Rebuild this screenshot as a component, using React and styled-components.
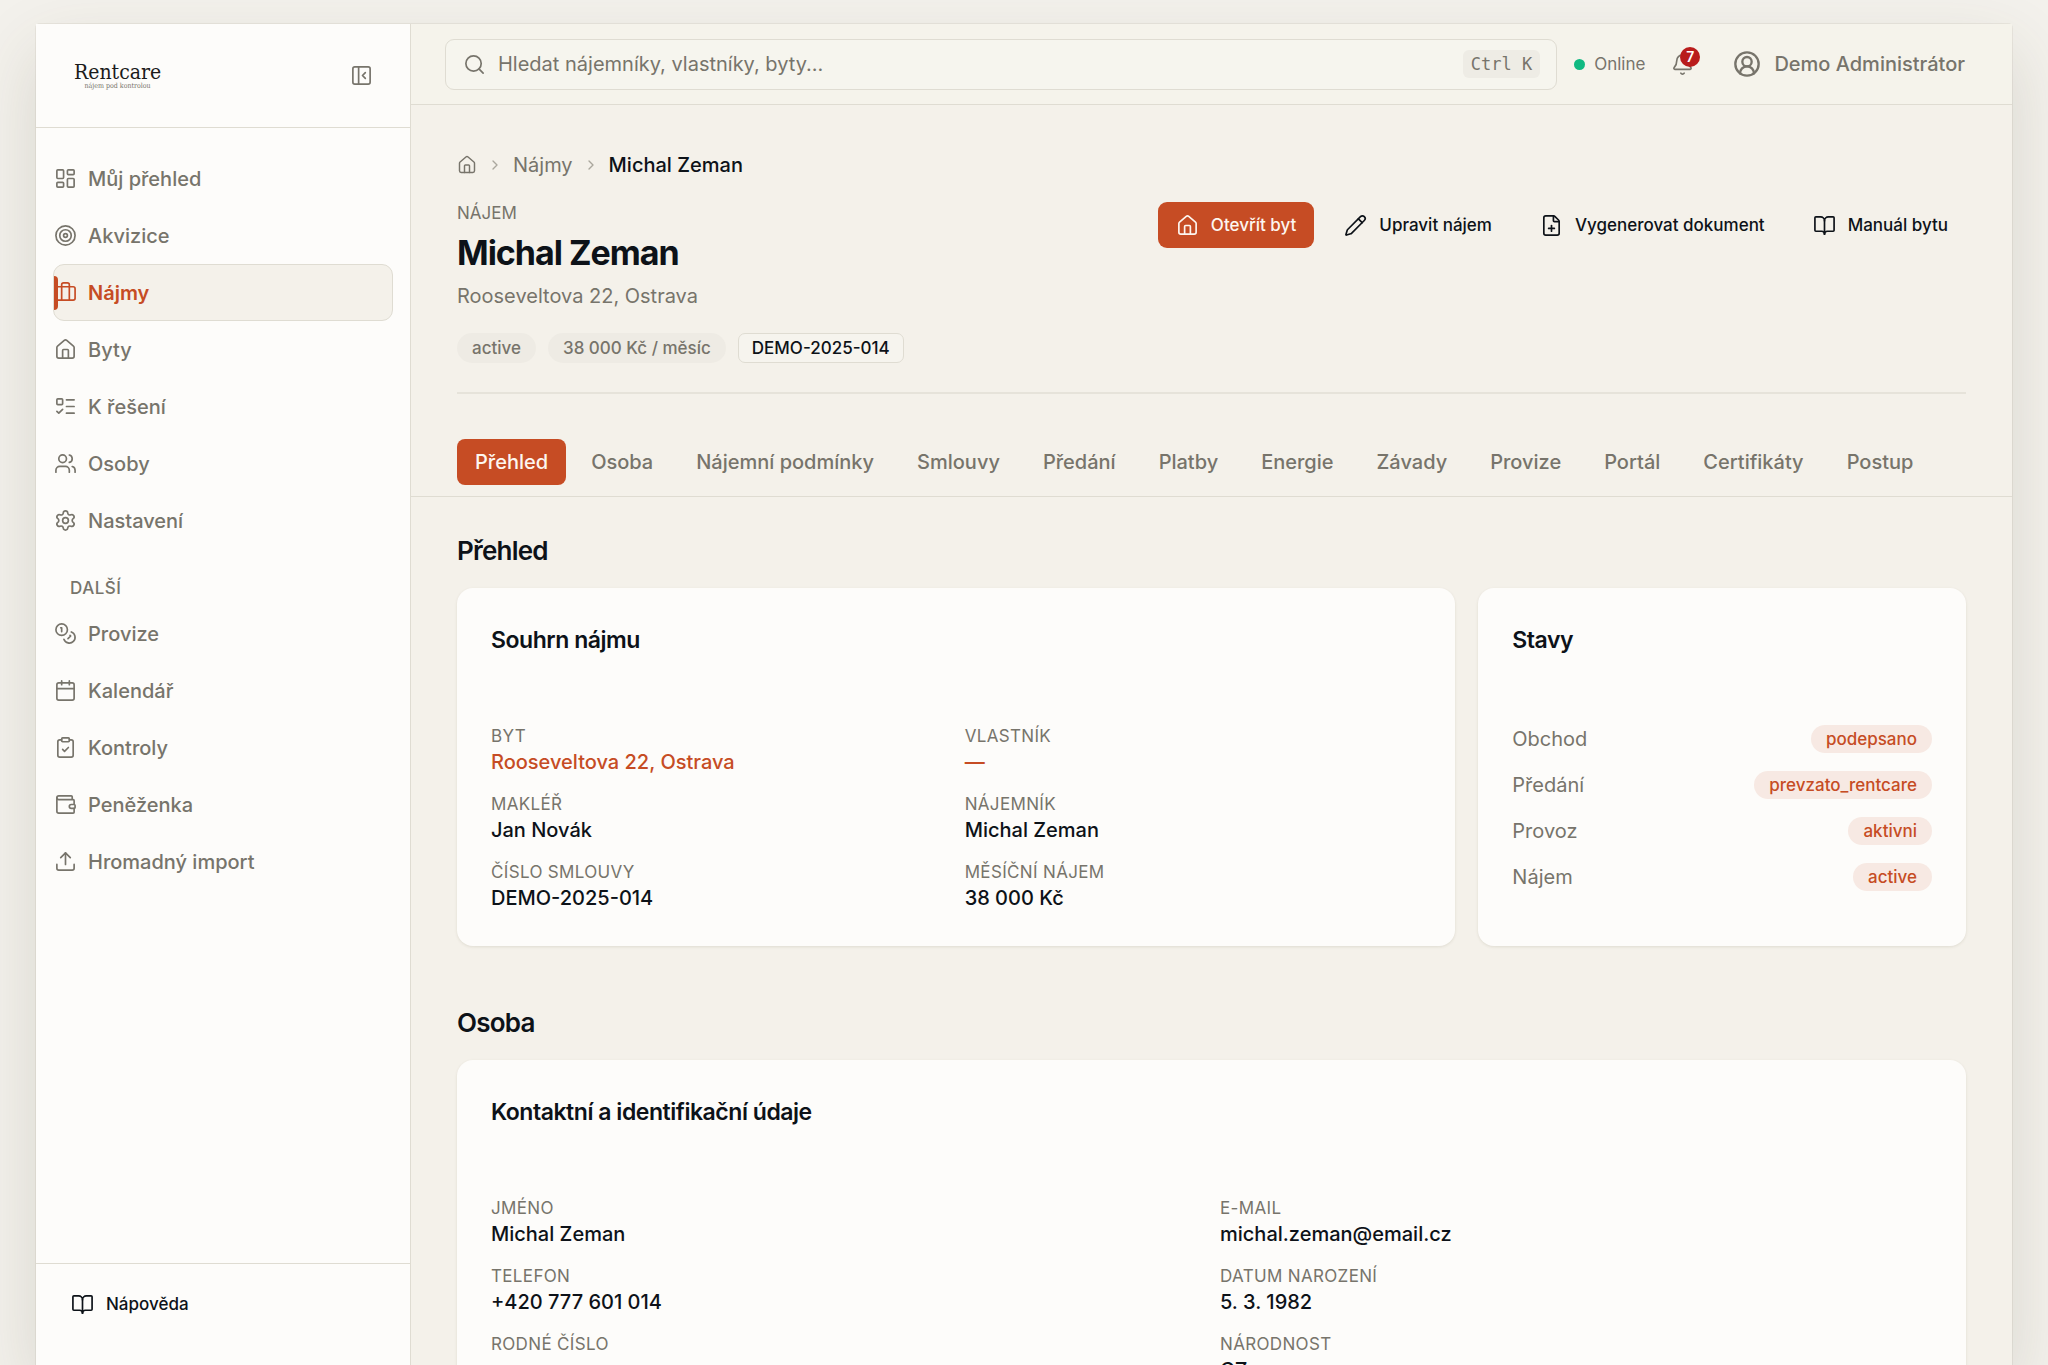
import React, { useState } from 'react';
import styled, { createGlobalStyle, css } from 'styled-components';
import {
  Bell,
  BookOpen,
  Briefcase,
  Calendar,
  ChevronRight,
  CircleUserRound,
  ClipboardCheck,
  Coins,
  FilePlus,
  House,
  LayoutDashboard,
  ListTodo,
  PanelLeftClose,
  Pencil,
  Search,
  Settings,
  Target,
  Upload,
  Users,
  Wallet,
} from 'lucide-react';

const GlobalStyle = createGlobalStyle`
  * {
    box-sizing: border-box;
  }

  body {
    margin: 0;
    background: #f3f1ec;
    color: #0d1218;
    font-family: Inter, 'Liberation Sans', sans-serif;
    font-size: 20px;
    line-height: 28px;
  }

  button,
  input {
    font: inherit;
    color: inherit;
  }

  a {
    color: inherit;
    text-decoration: none;
  }
`;

const muted = '#77746b';
const border = '#dfdcd2';
const accent = '#c64c24';

const Page = styled.div`
  height: 100vh;
  padding: 24px 36px 0;
  overflow: hidden;
`;

const Shell = styled.div`
  display: flex;
  height: 100%;
  background: #f4f1ea;
  border-radius: 4px 4px 0 0;
  box-shadow: 0 0 0 1px rgba(80, 75, 40, 0.07), 0 28px 70px rgba(80, 75, 45, 0.16);
`;

/* Sidebar */

const Sidebar = styled.aside`
  display: flex;
  flex-direction: column;
  flex: 0 0 375px;
  background: #fdfcfa;
  border-right: 1px solid ${border};
`;

const SidebarHead = styled.div`
  display: flex;
  align-items: center;
  justify-content: space-between;
  height: 104px;
  padding: 0 37px 0 38px;
  border-bottom: 1px solid ${border};
`;

const Logo = styled.a`
  display: flex;
  flex-direction: column;
  align-items: center;
  font-family: 'DejaVu Serif Condensed', 'DejaVu Serif', serif;
  font-size: 21px;
  line-height: 20px;
  color: #1b1b1b;
`;

const Tagline = styled.small`
  font-size: 7px;
  line-height: 8px;
  color: ${muted};
`;

const IconButton = styled.button`
  display: flex;
  padding: 0;
  border: none;
  background: none;
  color: ${muted};
  cursor: pointer;
`;

const Nav = styled.nav`
  flex: 1;
  padding: 22px 17px 0;
`;

const NavLabel = styled.div`
  padding: 28px 17px 5px;
  font-size: 17px;
  font-weight: 500;
  line-height: 23px;
  letter-spacing: 0.03em;
  color: ${muted};
`;

const NavItem = styled.a`
  position: relative;
  display: flex;
  align-items: center;
  gap: 11px;
  height: 57px;
  border: 1px solid transparent;
  border-radius: 11px;
  font-weight: 500;
  color: ${muted};

  ${({ $active }) =>
    $active &&
    css`
      background: #f4f1ea;
      border-color: ${border};
      color: ${accent};
      font-weight: 600;

      &::before {
        content: '';
        position: absolute;
        left: 0;
        width: 4px;
        height: 34px;
        border-radius: 0 4px 4px 0;
        background: ${accent};
      }
    `}
`;

const SidebarFoot = styled.div`
  padding: 17px 17px 38px;
  border-top: 1px solid ${border};
`;

/* Top bar */

const Main = styled.div`
  display: flex;
  flex-direction: column;
  flex: 1;
  min-width: 0;
  overflow: hidden;
`;

const TopBar = styled.header`
  display: flex;
  align-items: center;
  flex: 0 0 81px;
  gap: 17px;
  padding: 0 47px 0 34px;
  background: #f5f3eb;
  border-bottom: 1px solid ${border};
  color: ${muted};
`;

const SearchBox = styled.label`
  display: flex;
  align-items: center;
  flex: 1;
  gap: 12px;
  height: 51px;
  padding: 0 16px 0 17px;
  border: 1px solid ${border};
  border-radius: 9px;
  background: #f6f5ee;
`;

const SearchInput = styled.input`
  flex: 1;
  min-width: 0;
  padding: 0;
  border: none;
  outline: none;
  background: none;

  &::placeholder {
    color: ${muted};
    opacity: 1;
  }
`;

const Kbd = styled.kbd`
  padding: 0 8px;
  border-radius: 6px;
  background: #eeece5;
  font-family: 'DejaVu Sans Mono', 'Liberation Mono', monospace;
  font-size: 17px;
  line-height: 28px;
`;

const Status = styled.div`
  display: flex;
  align-items: center;
  gap: 9px;
  font-size: 17px;

  &::before {
    content: '';
    width: 11px;
    height: 11px;
    border-radius: 50%;
    background: #10b981;
  }
`;

const BellButton = styled(IconButton)`
  position: relative;
  margin: 0 22px 0 9px;
`;

const Count = styled.span`
  position: absolute;
  top: -6px;
  right: -6px;
  width: 20px;
  height: 20px;
  border-radius: 50%;
  background: #b91c1c;
  color: #fff;
  font-size: 14px;
  font-weight: 600;
  line-height: 20px;
  text-align: center;
`;

const UserButton = styled(IconButton)`
  align-items: center;
  gap: 13px;
  font-weight: 500;
`;

/* Page header */

const Content = styled.div`
  padding: 46px 46px 0;
`;

const Breadcrumbs = styled.nav`
  display: flex;
  align-items: center;
  gap: 10px;
  color: ${muted};

  strong {
    font-weight: 500;
    color: #0d1218;
  }
`;

const Separator = styled(ChevronRight)`
  color: #aaa79d;
`;

const PageHead = styled.div`
  display: flex;
  justify-content: space-between;
  align-items: flex-start;
  padding: 23px 0 29px;
  border-bottom: 2px solid #e6e3da;
`;

const Eyebrow = styled.div`
  font-size: 17px;
  line-height: 23px;
  color: ${muted};
`;

const Title = styled.h1`
  margin: 6px 0 8px;
  font-size: 34px;
  font-weight: 700;
  line-height: 43px;
  letter-spacing: -0.03em;
`;

const Subtitle = styled.div`
  color: ${muted};
`;

const Badges = styled.div`
  display: flex;
  gap: 12px;
  margin-top: 23px;
`;

const Badge = styled.span`
  padding: 1px 15px;
  border-radius: 15px;
  background: ${({ $accent }) => ($accent ? '#f7e9e3' : '#eeebe4')};
  color: ${({ $accent }) => ($accent ? accent : muted)};
  font-size: 17px;
  font-weight: 500;
  line-height: ${({ $accent }) => ($accent ? '26px' : '28px')};
`;

const CodeBadge = styled(Badge)`
  padding: 0 13px;
  border: 1px solid ${border};
  border-radius: 7px;
  background: #f6f4ee;
  color: #0d1218;
`;

const Actions = styled.div`
  display: flex;
  gap: 12px;
`;

const Button = styled.button`
  display: flex;
  align-items: center;
  gap: 12px;
  height: 46px;
  padding: 0 18px;
  border: none;
  border-radius: 9px;
  background: ${({ $primary }) => ($primary ? accent : 'transparent')};
  color: ${({ $primary }) => ($primary ? '#fdf6f0' : '#0d1218')};
  font-size: 17px;
  font-weight: 500;
  cursor: pointer;
`;

/* Tabs */

const Tabs = styled.nav`
  display: flex;
  gap: 7px;
  padding: 45px 46px 11px;
  border-bottom: 1px solid ${border};
`;

const Tab = styled.button`
  height: 46px;
  padding: 0 18px;
  border: none;
  border-radius: 8px;
  background: ${({ $active }) => ($active ? accent : 'transparent')};
  color: ${({ $active }) => ($active ? '#fdf6f0' : muted)};
  font-weight: 500;
  cursor: pointer;
`;

/* Sections and cards */

const Sections = styled.main`
  display: flex;
  flex-direction: column;
  gap: 59px;
  padding: 36px 46px 46px;
`;

const SectionTitle = styled.h2`
  margin: 0 0 19px;
  font-size: 26px;
  font-weight: 600;
  line-height: 36px;
  letter-spacing: -0.03em;
`;

const CardGrid = styled.div`
  display: grid;
  grid-template-columns: repeat(12, minmax(0, 1fr));
  gap: 23px;
`;

const Card = styled.article`
  grid-column: span ${({ $span }) => $span};
  padding: 34px;
  border-radius: 16px;
  background: #fdfcfa;
  box-shadow: 0 1px 3px rgba(80, 70, 40, 0.12);
`;

const CardTitle = styled.h3`
  margin: 0 0 67px;
  font-size: 23px;
  font-weight: 600;
  line-height: 36px;
  letter-spacing: -0.02em;
`;

const Fields = styled.dl`
  display: grid;
  grid-template-columns: 1fr 1fr;
  gap: 17px;
  margin: 0;
`;

const Field = styled.div`
  dt {
    font-size: 17px;
    line-height: 23px;
    letter-spacing: 0.02em;
    color: ${muted};
  }

  dd {
    margin: 0;
    font-weight: 500;
  }

  a {
    color: ${accent};
  }
`;

const StatusRows = styled.div`
  display: flex;
  flex-direction: column;
  gap: 18px;
`;

const StatusRow = styled.div`
  display: flex;
  align-items: center;
  justify-content: space-between;
  color: ${muted};
`;

const mainNav = [
  { label: 'Můj přehled', icon: LayoutDashboard },
  { label: 'Akvizice', icon: Target },
  { label: 'Nájmy', icon: Briefcase },
  { label: 'Byty', icon: House },
  { label: 'K řešení', icon: ListTodo },
  { label: 'Osoby', icon: Users },
  { label: 'Nastavení', icon: Settings },
];

const moreNav = [
  { label: 'Provize', icon: Coins },
  { label: 'Kalendář', icon: Calendar },
  { label: 'Kontroly', icon: ClipboardCheck },
  { label: 'Peněženka', icon: Wallet },
  { label: 'Hromadný import', icon: Upload },
];

const tabs = [
  'Přehled',
  'Osoba',
  'Nájemní podmínky',
  'Smlouvy',
  'Předání',
  'Platby',
  'Energie',
  'Závady',
  'Provize',
  'Portál',
  'Certifikáty',
  'Postup',
];

const summary = [
  { label: 'BYT', value: 'Rooseveltova 22, Ostrava', link: true },
  { label: 'VLASTNÍK', value: '—', link: true },
  { label: 'MAKLÉŘ', value: 'Jan Novák' },
  { label: 'NÁJEMNÍK', value: 'Michal Zeman' },
  { label: 'ČÍSLO SMLOUVY', value: 'DEMO-2025-014' },
  { label: 'MĚSÍČNÍ NÁJEM', value: '38 000 Kč' },
];

const contact = [
  { label: 'JMÉNO', value: 'Michal Zeman' },
  { label: 'E-MAIL', value: 'michal.zeman@email.cz' },
  { label: 'TELEFON', value: '+420 777 601 014' },
  { label: 'DATUM NAROZENÍ', value: '5. 3. 1982' },
  { label: 'RODNÉ ČÍSLO', value: '—' },
  { label: 'NÁRODNOST', value: 'CZ' },
];

const statuses = [
  { label: 'Obchod', value: 'podepsano' },
  { label: 'Předání', value: 'prevzato_rentcare' },
  { label: 'Provoz', value: 'aktivni' },
  { label: 'Nájem', value: 'active' },
];

const NavList = ({ items, active }) =>
  items.map(({ label, icon: Icon }) => (
    <NavItem key={label} href="#" $active={label === active}>
      <Icon size={23} strokeWidth={1.75} />
      {label}
    </NavItem>
  ));

const FieldList = ({ items }) => (
  <Fields>
    {items.map(({ label, value, link }) => (
      <Field key={label}>
        <dt>{label}</dt>
        <dd>{link ? <a href="#">{value}</a> : value}</dd>
      </Field>
    ))}
  </Fields>
);

const App = () => {
  const [activeTab, setActiveTab] = useState('Přehled');
  const [query, setQuery] = useState('');

  return (
    <Page>
      <GlobalStyle />
      <Shell>
        <Sidebar>
          <SidebarHead>
            <Logo href="#">
              Rentcare
              <Tagline>nájem pod kontrolou</Tagline>
            </Logo>
            <IconButton aria-label="Sbalit menu">
              <PanelLeftClose size={23} strokeWidth={1.75} />
            </IconButton>
          </SidebarHead>
          <Nav>
            <NavList items={mainNav} active="Nájmy" />
            <NavLabel>DALŠÍ</NavLabel>
            <NavList items={moreNav} />
          </Nav>
          <SidebarFoot>
            <Button>
              <BookOpen size={23} strokeWidth={1.75} />
              Nápověda
            </Button>
          </SidebarFoot>
        </Sidebar>

        <Main>
          <TopBar>
            <SearchBox>
              <Search size={23} strokeWidth={1.75} />
              <SearchInput
                type="text"
                aria-label="Hledat"
                placeholder="Hledat nájemníky, vlastníky, byty..."
                value={query}
                onChange={(e) => setQuery(e.target.value)}
              />
              <Kbd>Ctrl K</Kbd>
            </SearchBox>
            <Status>Online</Status>
            <BellButton aria-label="Oznámení">
              <Bell size={23} strokeWidth={1.75} />
              <Count>7</Count>
            </BellButton>
            <UserButton>
              <CircleUserRound size={28} strokeWidth={2} />
              Demo Administrátor
            </UserButton>
          </TopBar>

          <Content>
            <Breadcrumbs>
              <House size={20} strokeWidth={1.75} />
              <Separator size={16} strokeWidth={2} />
              <a href="#">Nájmy</a>
              <Separator size={16} strokeWidth={2} />
              <strong>Michal Zeman</strong>
            </Breadcrumbs>
            <PageHead>
              <div>
                <Eyebrow>NÁJEM</Eyebrow>
                <Title>Michal Zeman</Title>
                <Subtitle>Rooseveltova 22, Ostrava</Subtitle>
                <Badges>
                  <Badge>active</Badge>
                  <Badge>38 000 Kč / měsíc</Badge>
                  <CodeBadge>DEMO-2025-014</CodeBadge>
                </Badges>
              </div>
              <Actions>
                <Button $primary>
                  <House size={23} strokeWidth={1.75} />
                  Otevřít byt
                </Button>
                <Button>
                  <Pencil size={23} strokeWidth={1.75} />
                  Upravit nájem
                </Button>
                <Button>
                  <FilePlus size={23} strokeWidth={1.75} />
                  Vygenerovat dokument
                </Button>
                <Button>
                  <BookOpen size={23} strokeWidth={1.75} />
                  Manuál bytu
                </Button>
              </Actions>
            </PageHead>
          </Content>

          <Tabs>
            {tabs.map((tab) => (
              <Tab key={tab} $active={tab === activeTab} onClick={() => setActiveTab(tab)}>
                {tab}
              </Tab>
            ))}
          </Tabs>

          <Sections>
            <section>
              <SectionTitle>Přehled</SectionTitle>
              <CardGrid>
                <Card $span={8}>
                  <CardTitle>Souhrn nájmu</CardTitle>
                  <FieldList items={summary} />
                </Card>
                <Card $span={4}>
                  <CardTitle>Stavy</CardTitle>
                  <StatusRows>
                    {statuses.map(({ label, value }) => (
                      <StatusRow key={label}>
                        {label}
                        <Badge $accent>{value}</Badge>
                      </StatusRow>
                    ))}
                  </StatusRows>
                </Card>
              </CardGrid>
            </section>

            <section>
              <SectionTitle>Osoba</SectionTitle>
              <CardGrid>
                <Card $span={12}>
                  <CardTitle>Kontaktní a identifikační údaje</CardTitle>
                  <FieldList items={contact} />
                </Card>
              </CardGrid>
            </section>
          </Sections>
        </Main>
      </Shell>
    </Page>
  );
};

export default App;
